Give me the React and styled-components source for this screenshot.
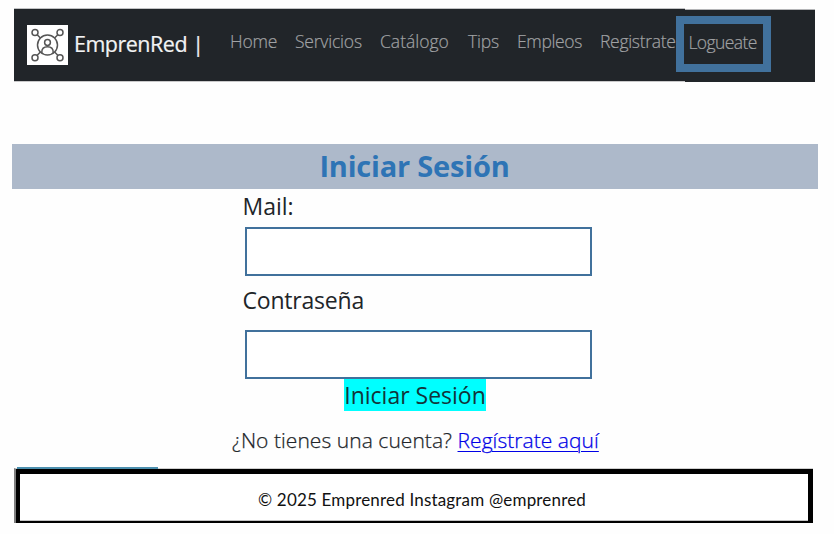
import React from "react";
import styled, { createGlobalStyle } from "styled-components";

const GlobalStyle = createGlobalStyle`
  *, *::before, *::after { box-sizing: border-box; }
  body {
    margin: 0;
    background: #fefefe;
    color: #212529;
    font-family: "Open Sans", "Noto Sans", sans-serif;
  }
`;

const Page = styled.div`
  display: flex;
  flex-direction: column;
  height: 534px;
  overflow: hidden;
  background: #fefefe;
`;

const Header = styled.header`
  display: flex;
  flex: none;
  margin: 8px 0 0 14px;
  height: 74px;
`;

const NavBar = styled.nav`
  display: flex;
  width: 671px;
  height: 74px;
  padding-left: 13px;
  background: #212529;
  border-top: 1px solid #c2c3c5;
  border-bottom: 1px solid #c9c9ca;
`;

const NavEnd = styled.div`
  width: 130px;
  height: 73px;
  margin-top: 1px;
  background: #212529;
  border-top: 1px solid #b4b5b7;
`;

const Logo = styled.svg`
  flex: none;
  width: 41px;
  height: 40px;
  margin-top: 16px;
  background: #fff;
`;

const Brand = styled.a`
  flex: none;
  width: 162px;
  padding: 20px 0 0 6px;
  color: #f2f3f4;
  font-size: 21.5px;
  line-height: 29px;
  letter-spacing: -0.5px;
  -webkit-text-stroke: 0.2px;
  white-space: pre;
`;

const NavLink = styled.a`
  flex: none;
  width: ${(p) => p.$width}px;
  margin-top: 19px;
  color: #a0a2a4;
  font-size: 17.5px;
  font-weight: 300;
  line-height: 26px;
  letter-spacing: ${(p) => p.$spacing ?? -0.2}px;
  -webkit-text-stroke: 0.2px;
  white-space: nowrap;
`;

const ActiveLink = styled.a`
  display: block;
  position: relative;
  left: -9px;
  top: 6px;
  width: 95px;
  height: 56px;
  padding-left: 4.5px;
  border: 8px solid #41719c;
  color: #a0a2a4;
  background: #212529;
  font-size: 17.5px;
  font-weight: 300;
  line-height: 37px;
  letter-spacing: -0.6px;
  -webkit-text-stroke: 0.2px;
  white-space: nowrap;
`;

const Title = styled.h1`
  flex: none;
  margin: 62px 0 0 12px;
  width: 806px;
  height: 45px;
  padding-right: 1px;
  background: #adb9ca;
  color: #2e74b5;
  font-size: 29px;
  font-weight: 700;
  line-height: 43px;
  letter-spacing: -0.2px;
  text-align: center;
`;

const Form = styled.form`
  display: flex;
  flex: none;
  flex-direction: column;
  width: 350px;
  margin-left: 242px;
`;

const Label = styled.label`
  height: ${(p) => p.$height}px;
  padding-left: 0.5px;
  font-size: 23px;
  line-height: ${(p) => p.$line}px;
  letter-spacing: ${(p) => p.$spacing ?? 0}px;
`;

const Input = styled.input`
  width: 347px;
  height: 49px;
  margin-left: 3px;
  padding: 0 10px;
  border: 2px solid #41719c;
  border-radius: 0;
  outline: none;
  background: #fff;
  font: inherit;
`;

const Submit = styled.button`
  width: 142px;
  height: 32px;
  margin-left: 102px;
  padding: 0;
  border: 0;
  background: #00ffff;
  color: #12343a;
  font-family: inherit;
  font-size: 23px;
  line-height: 32px;
  white-space: nowrap;
`;

const SignUp = styled.p`
  flex: none;
  margin: 14px 0 0 232px;
  height: 42px;
  font-size: 21px;
  font-weight: 300;
  line-height: 30px;
  letter-spacing: 0.05px;
  -webkit-text-stroke: 0.25px;
  white-space: nowrap;
`;

const SignUpLink = styled.a`
  color: #0000e6;
  text-decoration: underline;
  text-decoration-thickness: 1px;
  text-underline-offset: 3px;
`;

const Accent = styled.div`
  flex: none;
  position: relative;
  z-index: 1;
  width: 141px;
  height: 2px;
  margin-left: 17px;
  background: #4b8fae;
`;

const FooterFrame = styled.div`
  flex: none;
  width: 799px;
  height: 55px;
  margin-left: 14px;
  margin-top: -1px;
  border-left: 2px solid #7f7f7f;
  border-top: 1px solid #cfcfcf;
`;

const Footer = styled.footer`
  height: 54px;
  border: solid #000;
  border-width: 5px 5px 2px 4px;
  box-shadow: inset 0 -1px #c4c4c4;
  background: #fff;
  color: #111;
  font-family: Lato, "Open Sans", sans-serif;
  font-size: 17px;
  line-height: 52px;
  letter-spacing: 0.18px;
  padding-left: 238px;
  white-space: nowrap;
`;

const links = [
  { label: "Home", width: 65 },
  { label: "Servicios", width: 85 },
  { label: "Catálogo", width: 88, spacing: 0 },
  { label: "Tips", width: 49 },
  { label: "Empleos", width: 83, spacing: -0.35 },
  { label: "Registrate", width: 80, spacing: -0.3 },
];

function NetworkLogo() {
  return (
    <Logo viewBox="0 0 41 40" fill="none" stroke="#555" strokeWidth="1.5">
      <circle cx="20.5" cy="20" r="10" />
      <circle cx="20.5" cy="17.5" r="2.9" />
      <path d="M14.8 28v-1c0-3.3 2.3-5.3 5.7-5.3s5.7 2 5.7 5.3v1" />
      <path d="M10.2 9.8l3.2 3.2M30.8 9.8l-3.2 3.2M10.2 30.2l3.2-3.2M30.8 30.2l-3.2-3.2" />
      <circle cx="8" cy="7.5" r="3" />
      <circle cx="33" cy="7.5" r="3" />
      <circle cx="8" cy="32.8" r="3" />
      <circle cx="33" cy="32.8" r="3" />
    </Logo>
  );
}

export default function App() {
  return (
    <>
      <GlobalStyle />
      <Page>
        <Header>
          <NavBar>
            <NetworkLogo />
            <Brand>EmprenRed |</Brand>
            {links.map((l) => (
              <NavLink key={l.label} $width={l.width} $spacing={l.spacing}>
                {l.label}
              </NavLink>
            ))}
          </NavBar>
          <NavEnd>
            <ActiveLink>Logueate</ActiveLink>
          </NavEnd>
        </Header>
        <Title>Iniciar Sesión</Title>
        <Form onSubmit={(e) => e.preventDefault()}>
          <Label htmlFor="mail" $height={38} $line={34}>Mail:</Label>
          <Input id="mail" type="email" />
          <Label htmlFor="password" $height={54} $line={48} $spacing={-0.2}>Contraseña</Label>
          <Input id="password" type="password" />
          <Submit type="submit">Iniciar Sesión</Submit>
        </Form>
        <SignUp>
          ¿No tienes una cuenta? <SignUpLink>Regístrate aquí</SignUpLink>
        </SignUp>
        <Accent />
        <FooterFrame>
          <Footer>© 2025 Emprenred Instagram @emprenred</Footer>
        </FooterFrame>
      </Page>
    </>
  );
}
